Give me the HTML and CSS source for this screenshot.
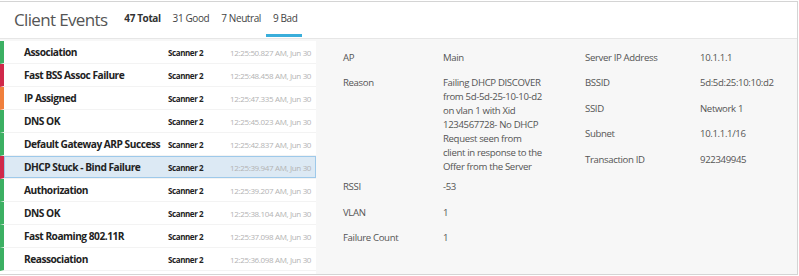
FILE: index.html
```html
<!DOCTYPE html>
<html>
<head>
<meta charset="utf-8">
<link rel="stylesheet" href="styles.css">
</head>
<body>
<div class="panel">
  <div class="header">
    <div class="title">Client Events</div>
    <div class="tabs">
      <span class="tab total">47 Total</span>
      <span class="tab">31 Good</span>
      <span class="tab">7 Neutral</span>
      <span class="tab active">9 Bad</span>
    </div>
  </div>
  <div class="body">
    <div class="list">
      <div class="row good"><span class="name">Association</span><span class="src">Scanner 2</span><span class="time">12:25:50.827 AM, Jun 30</span></div>
      <div class="row bad"><span class="name">Fast BSS Assoc Failure</span><span class="src">Scanner 2</span><span class="time">12:25:48.458 AM, Jun 30</span></div>
      <div class="row neutral"><span class="name">IP Assigned</span><span class="src">Scanner 2</span><span class="time">12:25:47.335 AM, Jun 30</span></div>
      <div class="row good"><span class="name">DNS OK</span><span class="src">Scanner 2</span><span class="time">12:25:45.023 AM, Jun 30</span></div>
      <div class="row good"><span class="name">Default Gateway ARP Success</span><span class="src">Scanner 2</span><span class="time">12:25:42.837 AM, Jun 30</span></div>
      <div class="row bad selected"><span class="name">DHCP Stuck - Bind Failure</span><span class="src">Scanner 2</span><span class="time">12:25:39.947 AM, Jun 30</span></div>
      <div class="row good"><span class="name">Authorization</span><span class="src">Scanner 2</span><span class="time">12:25:39.207 AM, Jun 30</span></div>
      <div class="row good"><span class="name">DNS OK</span><span class="src">Scanner 2</span><span class="time">12:25:38.104 AM, Jun 30</span></div>
      <div class="row good"><span class="name">Fast Roaming 802.11R</span><span class="src">Scanner 2</span><span class="time">12:25:37.098 AM, Jun 30</span></div>
      <div class="row good"><span class="name">Reassociation</span><span class="src">Scanner 2</span><span class="time">12:25:36.098 AM, Jun 30</span></div>
    </div>
    <div class="detail">
      <div class="col col-left">
        <div class="item"><span class="label">AP</span><span class="value">Main</span></div>
        <div class="item tall"><span class="label">Reason</span><span class="value">Failing DHCP DISCOVER<br>from 5d-5d-25-10-10-d2<br>on vlan 1 with Xid<br>1234567728- No DHCP<br>Request seen from<br>client in response to the<br>Offer from the Server</span></div>
        <div class="item"><span class="label">RSSI</span><span class="value">-53</span></div>
        <div class="item"><span class="label">VLAN</span><span class="value">1</span></div>
        <div class="item"><span class="label">Failure Count</span><span class="value">1</span></div>
      </div>
      <div class="col col-right">
        <div class="item"><span class="label">Server IP Address</span><span class="value">10.1.1.1</span></div>
        <div class="item"><span class="label">BSSID</span><span class="value">5d:5d:25:10:10:d2</span></div>
        <div class="item"><span class="label">SSID</span><span class="value">Network 1</span></div>
        <div class="item"><span class="label">Subnet</span><span class="value">10.1.1.1/16</span></div>
        <div class="item"><span class="label">Transaction ID</span><span class="value">922349945</span></div>
      </div>
    </div>
  </div>
</div>
</body>
</html>
```
FILE: styles.css
```css
* { box-sizing: border-box; }
html, body { margin: 0; padding: 0; background: #fff; }
body { font-family: "Open Sans", "Noto Sans", sans-serif; color: #333; }
.panel {
  width: 798px;
  height: 274px;
  margin-top: 1px;
  border: 1px solid #d4d4d4;
  border-left: none;
  display: flex;
  flex-direction: column;
  overflow: hidden;
}
.header {
  height: 37px;
  display: flex;
  align-items: center;
  border-bottom: 1px solid #e6e6e6;
  padding-left: 14px;
}
.title { font-size: 17px; color: #555; letter-spacing: -0.65px; margin-right: 16px; margin-top: -2px; white-space: nowrap; }
.tabs { display: flex; align-items: stretch; height: 100%; gap: 10px; }
.tab { font-size: 10px; color: #444; letter-spacing: -0.4px; display: flex; align-items: center; padding: 0 1px; height: 100%; position: relative; white-space: nowrap; margin-top: -2px; }
.tab.total { font-weight: 700; color: #333; }
.tab.active::after {
  content: ""; position: absolute; left: -6px; right: -4px; bottom: -1px; height: 3px; background: #3aaedb;
}
.body { display: flex; flex: 1; background: #f7f7f7; padding-top: 2px; }
.list { width: 316px; background: #fff; display: flex; flex-direction: column; }
.row {
  height: 23px;
  display: flex;
  align-items: center;
  border-left: 4px solid #3cb063;
  border-bottom: 1px solid #f3f3f3;
  padding-left: 20px;
  white-space: nowrap;
}
.row.bad { border-left-color: #d0294a; }
.row.neutral { border-left-color: #f07f3c; }
.row.selected { background: #dce9f4; box-shadow: inset 0 0 0 1px #9ec9ea; }
.name { width: 144px; font-size: 10.2px; font-weight: 700; color: #222; letter-spacing: -0.5px; }
.src { width: 62px; font-size: 8px; font-weight: 700; color: #222; letter-spacing: -0.4px; }
.time { font-size: 8px; color: #b3b3b3; letter-spacing: -0.35px; }
.detail { flex: 1; display: flex; padding: 4px 0 0 27px; font-size: 9.6px; color: #555; letter-spacing: -0.35px; }
.col { display: flex; flex-direction: column; }
.col-left { width: 242px; }
.item { display: flex; padding: 5.75px 0; line-height: 14px; }
.item.tall { padding-bottom: 0; }
.col-left .label { width: 100px; }
.col-left .value { width: 130px; white-space: nowrap; }
.col-right .label { width: 115px; }
```
